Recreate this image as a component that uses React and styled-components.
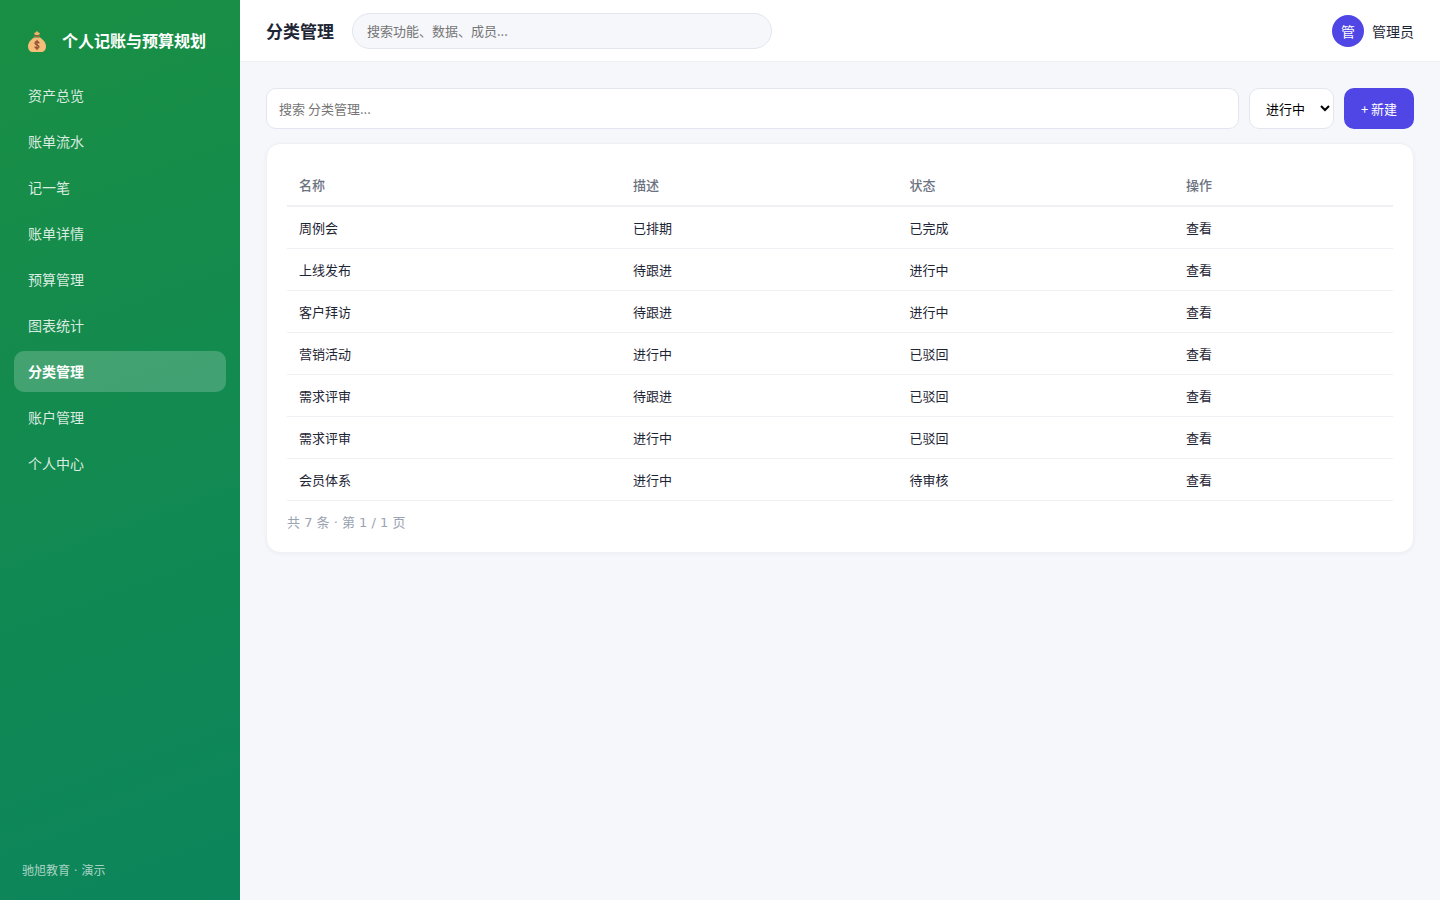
import React, { useState } from 'react';
import styled, { createGlobalStyle } from 'styled-components';

// shared colours
const colors = {
  primary: '#4f46e5',
  text: '#1e2535',
  muted: '#6b7280',
  faint: '#9aa3b2',
  line: '#eef0f4',
  border: '#e3e6ef',
  page: '#f5f7fb',
};

const GlobalStyle = createGlobalStyle`
  * {
    box-sizing: border-box;
  }
  body {
    margin: 0;
    background: ${colors.page};
    color: ${colors.text};
    font-family: "Noto Sans CJK SC", sans-serif;
    font-size: 14px;
    line-height: 20px;
  }
  button, input, select {
    font-family: inherit;
  }
`;

const Layout = styled.div`
  display: flex;
  min-height: 100vh;
`;

const Sidebar = styled.aside`
  display: flex;
  flex-direction: column;
  flex: 0 0 240px;
  padding: 20px 14px;
  background: linear-gradient(160deg, #198f44, #0c855c);
  color: #fff;
`;

const Brand = styled.div`
  display: flex;
  align-items: center;
  gap: 14px;
  height: 40px;
  margin-bottom: 15px;
  padding: 0 12px;
  font-size: 16px;
  font-weight: 700;
  white-space: nowrap;

  svg {
    flex: none;
  }
`;

const Nav = styled.nav`
  display: flex;
  flex-direction: column;
  gap: 5px;
`;

const NavLink = styled.a`
  padding: 10px 14px 11px;
  border-radius: 10px;
  background: ${(props) => (props.$active ? 'rgba(255, 255, 255, 0.2)' : 'transparent')};
  color: ${(props) => (props.$active ? '#fff' : 'rgba(255, 255, 255, 0.85)')};
  font-weight: ${(props) => (props.$active ? 700 : 400)};
  text-decoration: none;
`;

const SidebarFooter = styled.div`
  margin-top: auto;
  padding: 0 8px;
  color: rgba(255, 255, 255, 0.65);
  font-family: "DejaVu Sans", "Noto Sans CJK SC", sans-serif;
  font-size: 12px;
  line-height: 18px;
`;

const Main = styled.div`
  flex: 1;
  min-width: 0;
`;

const Header = styled.header`
  display: flex;
  align-items: center;
  gap: 18px;
  height: 62px;
  padding: 0 26px;
  border-bottom: 1px solid ${colors.line};
  background: #fff;
`;

const Title = styled.h1`
  margin: 0;
  font-size: 17px;
  font-weight: 700;
`;

const GlobalSearch = styled.input`
  flex: 0 1 420px;
  min-width: 0;
  height: 36px;
  padding: 0 14px;
  border: 1px solid ${colors.border};
  border-radius: 18px;
  background: ${colors.page};
  font-size: 13px;

  &::placeholder {
    color: #757575;
  }
`;

const User = styled.div`
  display: flex;
  align-items: center;
  gap: 8px;
  margin-left: auto;
`;

const Avatar = styled.div`
  display: flex;
  align-items: center;
  justify-content: center;
  width: 32px;
  height: 32px;
  border-radius: 50%;
  background: ${colors.primary};
  color: #fff;
`;

const Content = styled.main`
  padding: 26px;
`;

const Toolbar = styled.div`
  display: flex;
  gap: 10px;
  height: 41px;
  margin-bottom: 14px;
`;

const SearchInput = styled.input`
  flex: 1;
  min-width: 0;
  padding: 0 12px;
  border: 1px solid ${colors.border};
  border-radius: 10px;
  background: #fff;
  font-size: 13px;

  &::placeholder {
    color: #757575;
  }
`;

const StatusSelect = styled.select`
  width: 85px;
  padding: 0 0 0 12px;
  border: 1px solid ${colors.border};
  border-radius: 10px;
  background: #fff;
  color: #000;
  font-size: 13px;
`;

const PrimaryButton = styled.button`
  width: 70px;
  padding: 0;
  border: 0;
  border-radius: 10px;
  background: ${colors.primary};
  color: #fff;
  font-size: 13px;
  cursor: pointer;
`;

const Card = styled.section`
  padding: 20px;
  border: 1px solid ${colors.line};
  border-radius: 14px;
  background: #fff;
  box-shadow: 0 1px 4px rgba(30, 37, 80, 0.04);
`;

const Table = styled.table`
  width: 100%;
  border-collapse: separate;
  border-spacing: 0;
  table-layout: fixed;
  font-size: 13px;

  th, td {
    height: 42px;
    padding: 0 12px;
    text-align: left;
    border-bottom: 1px solid ${colors.line};
  }
  th {
    height: 43px;
    color: ${colors.muted};
    font-weight: 500;
    border-bottom-width: 2px;
  }
`;

const HeadCell = styled.th`
  width: ${(props) => props.$width};
`;

const RowLink = styled.a`
  color: inherit;
  text-decoration: none;
`;

const Pagination = styled.div`
  margin-top: 13px;
  color: ${colors.faint};
  font-family: "DejaVu Sans", "Noto Sans CJK SC", sans-serif;
  font-size: 13px;
  line-height: 18px;
`;

const MoneyBag = () => (
  <svg width="22" height="24" viewBox="0 0 22 24" aria-hidden="true">
    <path d="M8 9.500C5 11.500 2 14.500 2 18.500C2 22 4 24 7 24H15C18 24 20 22 20 18.500C20 14.500 17 11.500 14 9.500Z" fill="#f6bd78" />
    <path d="M9 7L8 5L9.500 4.500L11 3L12.500 4.500L14 5L13 7Z" fill="#f0b16a" />
    <path d="M8.500 8.200H13.500" stroke="#a8673f" strokeWidth="1.400" strokeLinecap="round" />
    <path d="M13 15C12.500 13.300 9 13.300 9 15.300C9 17.300 13 16.700 13 18.700C13 20.700 9.500 20.700 9 19M11 12.500V21.500" fill="none" stroke="#8d4f38" strokeWidth="1.300" strokeLinecap="round" />
  </svg>
);

const menu = [
  '资产总览',
  '账单流水',
  '记一笔',
  '账单详情',
  '预算管理',
  '图表统计',
  '分类管理',
  '账户管理',
  '个人中心',
];

const columns = [
  { label: '名称', width: '30.2%' },
  { label: '描述', width: '25%' },
  { label: '状态', width: '25%' },
  { label: '操作', width: 'auto' },
];

const rows = [
  ['周例会', '已排期', '已完成'],
  ['上线发布', '待跟进', '进行中'],
  ['客户拜访', '待跟进', '进行中'],
  ['营销活动', '进行中', '已驳回'],
  ['需求评审', '待跟进', '已驳回'],
  ['需求评审', '进行中', '已驳回'],
  ['会员体系', '进行中', '待审核'],
];

const App = () => {
  const [active, setActive] = useState('分类管理');

  return (
    <Layout>
      <GlobalStyle />
      <Sidebar>
        <Brand>
          <MoneyBag />
          <span>个人记账与预算规划</span>
        </Brand>
        <Nav>
          {menu.map((item) => (
            <NavLink
              key={item}
              href="#"
              $active={item === active}
              aria-current={item === active ? 'page' : undefined}
              onClick={() => setActive(item)}>
              {item}
            </NavLink>
          ))}
        </Nav>
        <SidebarFooter>驰旭教育 · 演示</SidebarFooter>
      </Sidebar>
      <Main>
        <Header>
          <Title>{active}</Title>
          <GlobalSearch type="text" aria-label="搜索" placeholder="搜索功能、数据、成员..." />
          <User>
            <Avatar>管</Avatar>
            <span>管理员</span>
          </User>
        </Header>
        <Content>
          <Toolbar>
            <SearchInput type="text" aria-label={`搜索 ${active}`} placeholder={`搜索 ${active}...`} />
            <StatusSelect aria-label="状态" defaultValue="进行中">
              <option>进行中</option>
              <option>已完成</option>
              <option>待审核</option>
              <option>已驳回</option>
            </StatusSelect>
            <PrimaryButton type="button">+ 新建</PrimaryButton>
          </Toolbar>
          <Card>
            <Table>
              <thead>
                <tr>
                  {columns.map((col) => (
                    <HeadCell key={col.label} scope="col" $width={col.width}>{col.label}</HeadCell>
                  ))}
                </tr>
              </thead>
              <tbody>
                {rows.map(([name, desc, status], i) => (
                  <tr key={i}>
                    <td>{name}</td>
                    <td>{desc}</td>
                    <td>{status}</td>
                    <td><RowLink href="#">查看</RowLink></td>
                  </tr>
                ))}
              </tbody>
            </Table>
            <Pagination>共 7 条 · 第 1 / 1 页</Pagination>
          </Card>
        </Content>
      </Main>
    </Layout>
  );
};

export default App;
